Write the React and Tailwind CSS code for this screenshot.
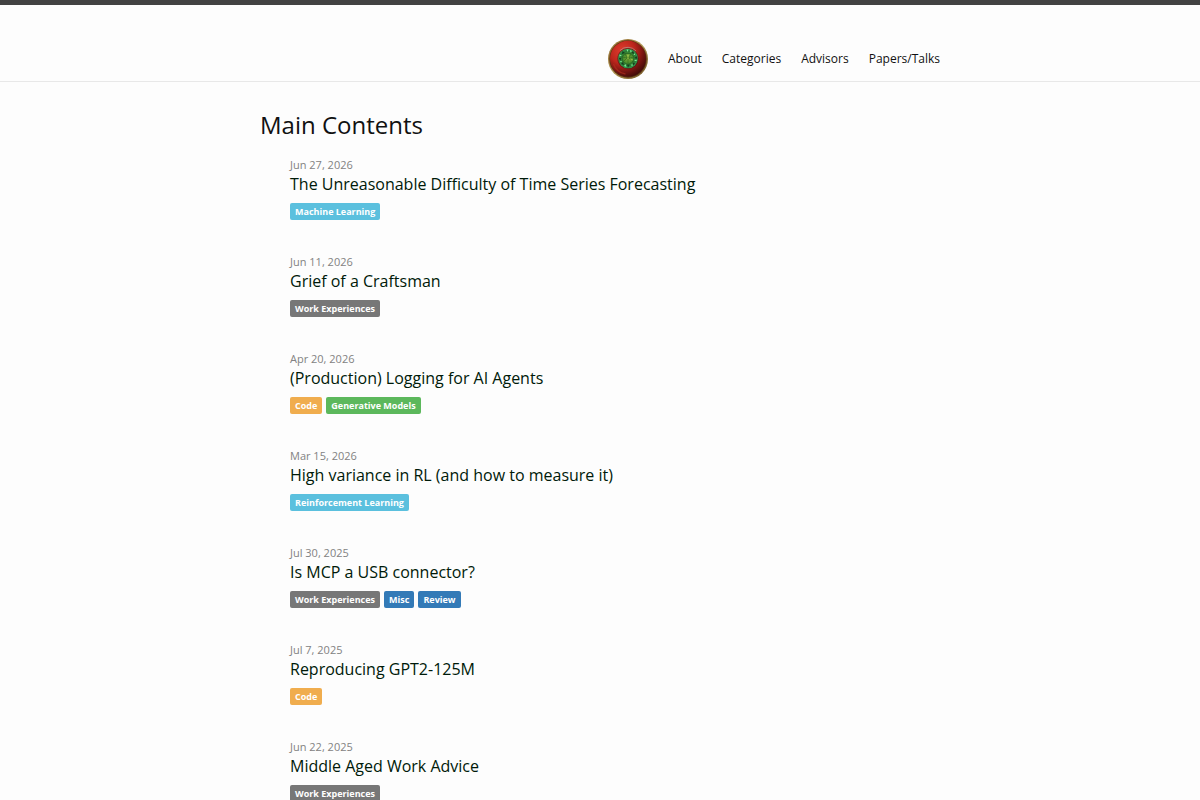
const navLinks = ["About", "Categories", "Advisors", "Papers/Talks"];

const tagColors = {
  "Machine Learning": "bg-[#5bc0de]",
  "Reinforcement Learning": "bg-[#5bc0de]",
  "Work Experiences": "bg-[#777777]",
  "Generative Models": "bg-[#5cb85c]",
  Code: "bg-[#f0ad4e]",
  Misc: "bg-[#337ab7]",
  Review: "bg-[#337ab7]",
};

const posts = [
  { date: "Jun 27, 2026", title: "The Unreasonable Difficulty of Time Series Forecasting", tags: ["Machine Learning"] },
  { date: "Jun 11, 2026", title: "Grief of a Craftsman", tags: ["Work Experiences"] },
  { date: "Apr 20, 2026", title: "(Production) Logging for AI Agents", tags: ["Code", "Generative Models"] },
  { date: "Mar 15, 2026", title: "High variance in RL (and how to measure it)", tags: ["Reinforcement Learning"] },
  { date: "Jul 30, 2025", title: "Is MCP a USB connector?", tags: ["Work Experiences", "Misc", "Review"] },
  { date: "Jul 7, 2025", title: "Reproducing GPT2-125M", tags: ["Code"] },
  { date: "Jun 22, 2025", title: "Middle Aged Work Advice", tags: ["Work Experiences"] },
];

const Logo = () => (
  <svg className="w-10 h-10" viewBox="0 0 40 40" aria-hidden="true">
    <defs>
      <radialGradient id="dome" cx="0.34" cy="0.28" r="0.78">
        <stop offset="0" stopColor="#e03c2e" />
        <stop offset="0.45" stopColor="#bd261c" />
        <stop offset="0.75" stopColor="#761511" />
        <stop offset="1" stopColor="#3c0b08" />
      </radialGradient>
      <linearGradient id="rim" x1="0" y1="0" x2="1" y2="1">
        <stop offset="0" stopColor="#8f6a2c" />
        <stop offset="0.5" stopColor="#b09352" />
        <stop offset="1" stopColor="#6b4e22" />
      </linearGradient>
      <radialGradient id="gem" cx="0.5" cy="0.5" r="0.5">
        <stop offset="0" stopColor="#7fa83a" />
        <stop offset="0.45" stopColor="#4d8f2c" />
        <stop offset="0.75" stopColor="#2a7a35" />
        <stop offset="1" stopColor="#2f9a4c" />
      </radialGradient>
    </defs>
    <circle cx="20" cy="20" r="20" fill="url(#rim)" />
    <circle cx="20" cy="20" r="18.7" fill="#5a3413" />
    <circle cx="20" cy="19.8" r="18" fill="url(#dome)" />
    <path d="M5.5 25a15.5 15.5 0 0 0 12 10" fill="none" stroke="#b5301f" strokeWidth="1.5" opacity="0.6" />
    <circle cx="20" cy="19.5" r="10.6" fill="#3a1712" opacity="0.6" />
    <path d="M12 11.5a11 11 0 0 1 16 0.5" fill="none" stroke="#b99a94" strokeWidth="1" opacity="0.7" />
    <circle cx="20" cy="19.5" r="9.8" fill="url(#gem)" />
    {/* facettes */}
    <path d="M14.5 12l2.5 2-3 1zM25 12l1.500 3-3-1zM28.500 17l-2 2 3 1zM27 24.500l-2-1 0 3zM20 28.500l-1-3 3 0zM13 25l2-2 1 3zM10.800 19l2.500 0-1 2.500z" fill="#153f20" />
    <path d="M18.500 10.500l2 0-1 2.500zM11.500 15.500l2.500 1-2.500 1zM28 20.500l1 1.500-3 0zM16 27l1.500-2 1 3zM24 27.500l-1-2 2 0zM22 11l2 1-1.500 1.500zM12 22l2 0-1 1.500zM27 14l0 2-1.500 0z" fill="#7cea96" />
    <path d="M17 14.500h6l3 3.500-1 5-5 2.500-5-2.500-1-5z" fill="none" stroke="#1d5c22" strokeWidth="0.6" />
    <path d="M17 14.500l2 4.500-5-1M23 14.500l-2 4.500 5-1M19 19l-4 4M21 19l4 4M20 20v5" fill="none" stroke="#2b651c" strokeWidth="0.6" />
    <path d="M18.500 15.500h3l-1.500 3zM22 20l3 0-1 2z" fill="#a0c24c" opacity="0.8" />
  </svg>
);

const Header = () => (
  <header className="border-t-5 border-t-[#424242] border-b border-b-[#e8e8e8] pt-8">
    <nav className="max-w-[680px] mx-auto h-11 flex items-center justify-end gap-5">
      <a href="#home" aria-label="Home">
        <Logo />
      </a>
      {navLinks.map((name) => (
        <a key={name} href={`#${name.toLowerCase()}`} className="text-xs text-[#111111] hover:underline">
          {name}
        </a>
      ))}
    </nav>
  </header>
);

const Post = ({ post }) => (
  <li>
    <span className="block text-[11px] leading-4 text-[#828282]">{post.date}</span>
    <h2 className="text-base leading-[22px] text-[#001a09]">
      <a href="#post" className="hover:underline">{post.title}</a>
    </h2>
    <div className="mt-2 flex flex-wrap gap-1">
      {post.tags.map((tag) => (
        <a key={tag} href="#tag" className={`${tagColors[tag]} rounded-[2px] px-[5px] text-[9px] leading-[17px] font-bold text-white`}>
          {tag}
        </a>
      ))}
    </div>
  </li>
);

const App = () => {
  return (
    <div className="min-h-screen bg-[#fdfdfd] font-['Open_Sans',sans-serif]">
      <Header />
      <main className="max-w-[680px] mx-auto pt-[27px] pb-8">
        <h1 className="text-2xl text-[#111111]">Main Contents</h1>
        <ul className="mt-4 pl-[30px] flex flex-col gap-[34px]">
          {posts.map((post) => (
            <Post key={post.title} post={post} />
          ))}
        </ul>
      </main>
    </div>
  );
};

export default App;
